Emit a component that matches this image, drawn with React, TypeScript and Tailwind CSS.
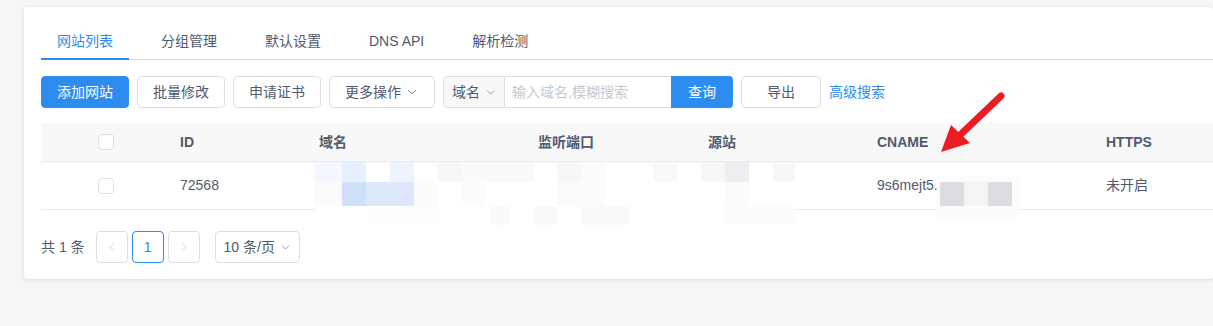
import { ChevronDown, ChevronLeft, ChevronRight } from "lucide-react";

const font = "font-['Liberation_Sans','Noto_Sans_CJK_SC',sans-serif]";

const tabs = ["网站列表", "分组管理", "默认设置", "DNS API", "解析检测"];
const cols = ["ID", "域名", "监听端口", "源站", "CNAME", "HTTPS"];

// mosaic blocks hiding the domain / origin / cname (page coords)
const mosaic: [number, number, number, number, string][] = [
	[314, 162, 481, 63, "#ffffff"],
	[314, 162, 28, 20, "#f4f8fe"],
	[342, 162, 24, 20, "#e6effc"],
	[390, 162, 24, 20, "#eef4fe"],
	[438, 162, 24, 20, "#f7f7f7"],
	[462, 162, 24, 20, "#f9fbfa"],
	[486, 162, 48, 20, "#f9f9f9"],
	[557, 162, 24, 20, "#f7f7f7"],
	[581, 162, 24, 20, "#fbfbfb"],
	[653, 162, 24, 20, "#f9f9f9"],
	[701, 162, 24, 20, "#f7f7f8"],
	[725, 162, 24, 20, "#eceef1"],
	[773, 162, 22, 20, "#f8f8f8"],
	[314, 182, 28, 24, "#fbfbfc"],
	[342, 182, 24, 24, "#cfe0f8"],
	[366, 182, 48, 24, "#dde9fa"],
	[414, 182, 24, 24, "#fcfcfc"],
	[462, 182, 24, 24, "#fcfcfc"],
	[557, 182, 48, 24, "#fbfbfb"],
	[725, 182, 24, 24, "#fbfbfb"],
	[366, 206, 72, 19, "#fdfdfd"],
	[490, 206, 20, 19, "#fafafa"],
	[534, 206, 23, 19, "#fafafa"],
	[581, 206, 48, 19, "#fafafa"],
	[725, 206, 70, 19, "#fcfcfc"],
	[937, 176, 82, 43, "#fcfcfc"],
	[940, 182, 24, 24, "#dcdde0"],
	[964, 182, 24, 24, "#f3f5f4"],
	[988, 182, 24, 24, "#dcdde0"],
];

function Btn({ children, primary, className = "" }: { children: React.ReactNode; primary?: boolean; className?: string }) {
	return (
		<button
			className={
				(primary
					? "bg-[#2d8cf0] border-[#2d8cf0] text-white "
					: "bg-white border-[#dcdee2] text-[#515a6e] ") +
				"h-8 px-[15px] border rounded flex items-center justify-center text-[14px] " +
				className
			}
		>
			{children}
		</button>
	);
}

export default function App() {
	return (
		<div className={`relative w-[1213px] h-[326px] overflow-hidden bg-[#f5f6f8] ${font}`}>
			<div className="flex pt-[7px] pl-6">
				<div className="w-[1240px] bg-white rounded shadow-[0_1px_4px_rgba(0,0,0,0.12)] pt-4 pl-[17px] pb-4">
					{/* tabs */}
					<div className="flex gap-4 border-b border-[#dcdee2]">
						{tabs.map((t, i) => (
							<div
								key={t}
								className={
									"relative h-9 px-4 leading-[36px] text-[14px] " +
									(i === 0 ? "text-[#2d8cf0]" : "text-[#515a6e]")
								}
							>
								{t}
								{i === 0 && <div className="absolute left-0 right-0 bottom-[-1px] h-[2px] bg-[#2d8cf0]" />}
							</div>
						))}
					</div>

					{/* toolbar */}
					<div className="flex items-center gap-2 mt-4">
						<Btn primary>添加网站</Btn>
						<Btn>批量修改</Btn>
						<Btn>申请证书</Btn>
						<Btn className="gap-1 w-[106px]">
							更多操作
							<ChevronDown size={14} strokeWidth={1.5} />
						</Btn>
						<div className="flex h-8">
							<div className="w-[62px] flex items-center gap-1 pl-2 border border-[#dcdee2] rounded-l bg-[#f8f8f9] text-[14px] text-[#515a6e]">
								域名
								<ChevronDown size={13} strokeWidth={1.5} className="text-[#808695]" />
							</div>
							<div className="w-[166px] flex items-center pl-[7px] border-y border-[#dcdee2] text-[14px] text-[#c5c8ce]">
								输入域名,模糊搜索
							</div>
							<button className="w-[62px] rounded-r bg-[#2d8cf0] text-white text-[14px]">查询</button>
						</div>
						<Btn className="w-20">导出</Btn>
						<span className="text-[14px] text-[#2d8cf0]">高级搜索</span>
					</div>

					{/* table */}
					<div className="mt-[15px] text-[14px] text-[#515a6e]">
						<div className="grid grid-cols-[129px_139px_219px_170px_169px_229px_1fr] h-[39px] bg-[#f8f8f9] border-b border-[#e8eaec] items-center font-bold">
							<div className="flex justify-center">
								<div className="w-4 h-4 border border-[#dcdee2] rounded-sm bg-white" />
							</div>
							{cols.map((c) => (
								<div key={c} className="pl-[10px]">
									{c}
								</div>
							))}
						</div>
						<div className="grid grid-cols-[129px_139px_219px_170px_169px_229px_1fr] h-[48px] border-b border-[#e8eaec] items-center">
							<div className="flex justify-center">
								<div className="w-4 h-4 border border-[#dcdee2] rounded-sm bg-white" />
							</div>
							<div className="pl-[10px]">72568</div>
							<div />
							<div />
							<div />
							<div className="pl-[10px]">9s6mejt5.</div>
							<div className="pl-[10px]">未开启</div>
						</div>
					</div>

					{/* pagination */}
					<div className="flex items-center mt-[21px] text-[14px] text-[#515a6e]">
						<span className="mr-[11px]">共 1 条</span>
						<div className="w-8 h-8 border border-[#dcdee2] rounded flex items-center justify-center text-[#c5c8ce]">
							<ChevronLeft size={14} strokeWidth={1.5} />
						</div>
						<div className="w-8 h-8 ml-1 border border-[#2d8cf0] rounded flex items-center justify-center text-[#2d8cf0]">
							1
						</div>
						<div className="w-8 h-8 ml-1 border border-[#dcdee2] rounded flex items-center justify-center text-[#c5c8ce]">
							<ChevronRight size={14} strokeWidth={1.5} />
						</div>
						<div className="w-[85px] h-8 ml-[15px] border border-[#dcdee2] rounded flex items-center pl-2 gap-1">
							10 条/页
							<ChevronDown size={13} strokeWidth={1.5} className="text-[#808695]" />
						</div>
					</div>
				</div>
			</div>

			{/* mosaic + arrow overlay */}
			<svg className="absolute left-0 top-0 pointer-events-none" width="1213" height="326">
				{mosaic.map(([x, y, w, h, c], i) => (
					<rect key={i} x={x} y={y} width={w} height={h} fill={c} />
				))}
				<line x1="1001" y1="96" x2="958" y2="137" stroke="#ec1c24" strokeWidth="7" strokeLinecap="round" />
				<polygon points="941,152 951,125 970,143" fill="#ec1c24" />
			</svg>
		</div>
	);
}
